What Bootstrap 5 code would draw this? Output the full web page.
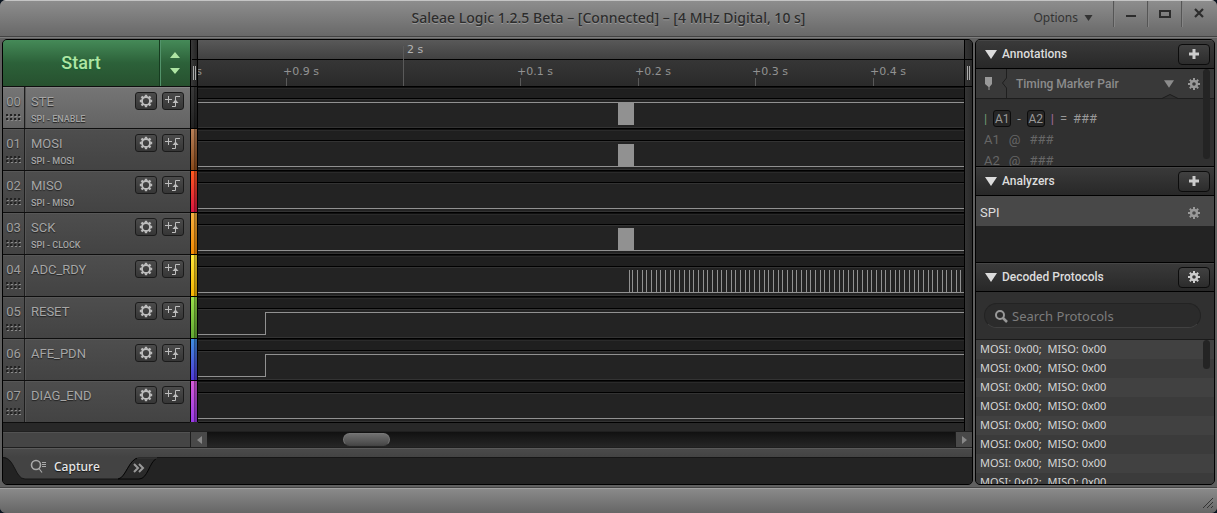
<!DOCTYPE html>
<html lang="en">
<head>
<meta charset="utf-8">
<meta name="viewport" content="width=device-width, initial-scale=1">
<title>Saleae Logic 1.2.5 Beta</title>
<link href="https://cdn.jsdelivr.net/npm/bootstrap@5.3.0/dist/css/bootstrap.min.css" rel="stylesheet">
<style>
body{background:#0a1420;font-family:Roboto,"Liberation Sans",sans-serif;font-size:13px;line-height:16px;color:#999}
button{font-family:inherit;border:0;background:none;padding:0;color:inherit}
svg{display:block;flex:none}
.app{background:#606060;border-radius:6px;overflow:hidden}
.lucid{font-family:"Noto Sans","Open Sans",sans-serif}
.titlebar{height:38px;border-top:1px solid #c4c4c4;background:linear-gradient(#8d8d8d,#686868 35px,#424242 35px,#424242 36px,#7b7b7b 36px);color:#2c2c2c;text-shadow:0 1px 0 #9a9a9a}
.titlebar h1{font-size:14px;line-height:18px;font-weight:500}
.win-tools{right:2px;top:0}
.win-tools .opt{font-size:12px;color:#333;margin-right:20px;gap:6px}
.wbtn{width:34px;height:26px;border-left:1px solid #555;box-shadow:inset 1px 0 #858585;color:#333}
.work{padding:1px 2px 3px;gap:2px}
.panel{border:1px solid #000;border-radius:5px;overflow:hidden;background:#282828}
.names{width:187px}
.strip{width:8px}
.head{height:46px}
.start{background:linear-gradient(#458a58,#2c6139 50%,#27512f);color:#aee5a3}
.start button:first-child{font-size:18px;font-weight:500;text-shadow:0 1px 1px #163;border-right:1px solid #163c20}
.start .updown{width:30px;box-shadow:inset 1px 0 #52936a}
#channels{border-bottom:1px solid #0e0e0e}
.chan{height:42px;border-top:1px solid #0e0e0e;background:linear-gradient(#4e4e4e,#434343);box-shadow:inset 0 1px #575757}
.chan.on{background:linear-gradient(#757575,#636363);box-shadow:inset 0 1px #858585}
.chan .num{width:22px;border-right:1px solid #1d1d1d;padding-top:7px;color:#a0a0a0;text-shadow:0 1px 1px #222}
.chan .lbl{padding:7px 0 0 6px;box-shadow:inset 1px 0 #555}
.chan .t1{font-size:13px;line-height:16px;color:#a6a6a6;text-shadow:0 1px 1px #222}
.chan .t2{font-size:9px;line-height:12px;margin-top:3px;color:#a6a6a6;font-weight:500;text-shadow:0 1px 1px #222}
.chan .tools{padding:5px 6px 0 0;gap:5px}
.sq{width:22px;height:18px;border:1px solid #1b1b1b;border-radius:3px;background:linear-gradient(#4b4b4b,#363636);color:#bdbdbd;display:grid;place-items:center}
.grip{width:8px;border:1px solid #000;border-width:0 1px;background:linear-gradient(90deg,#3a3a3a,#262626)}
.tag{height:42px;border:solid #000;border-width:1px 1px 0;background:linear-gradient(90deg,transparent 3px,rgba(0,0,0,.5) 3px,rgba(0,0,0,.25) 4px),linear-gradient(var(--a),var(--b))}
.ruler{background:linear-gradient(#595959,#414141 19px,#000 19px,#000 20px,#363636 20px,#2a2a2a)}
.ruler text{font:400 11px "DejaVu Sans",sans-serif;fill:#929292}
.ruler .major{fill:#b4b4b4}
.lane{height:42px;background:linear-gradient(#000 1px,#101010 1px,#101010 2px,#2a2a2a 2px,#2a2a2a 3px,#1f1f1f 3px,#1f1f1f 12px,#000 12px,#000 13px,#333 13px,#333 14px,#232323 14px,#232323 41px,#333 41px)}
.lane svg{stroke:#919191;fill:none;shape-rendering:crispEdges}
.filler{min-height:9px;border-top:1px solid #000}
.rail{width:8px;border-left:1px solid #000;background:linear-gradient(90deg,#343434,#292929)}
.hbar{height:16px;border-top:1px solid #202020;background:#454545;box-shadow:inset 0 1px #525252}
.track{background:linear-gradient(#111,#262626)}
.arrow{width:17px;background:#494949;color:#888;border-left:1px solid #1d1d1d}
.thumb{left:16%;width:47px;height:13px;top:1px;border-radius:7px;background:linear-gradient(#707070,#484848);border:1px solid #777;border-bottom-color:#444}
.tabs{height:37px;border-top:1px solid #1f1f1f;background:linear-gradient(#5a5a5a 1px,#4a4a4a 1px,#434343 9px,#161616 9px,#161616 10px,#232323 10px)}
.tabs .shape{left:0;top:9px}
.tabs .cap{color:#e8e8e8;font-size:12px;font-weight:500;padding:11px 0 0 27px;gap:7px;text-shadow:0 1px 1px #111}
.tabs .more{margin:13px 0 0 33px}
.side{width:240px;background:#232323}
.sec{height:29px;border-bottom:1px solid #000;background:linear-gradient(#3a3a3a,#282828);color:#dcdcdc;padding:0 4px 0 9px;gap:5px;box-shadow:inset 0 1px #464646}
.sec.mid{height:30px;border-top:1px solid #000}
.sec h2{font-size:12px;line-height:18px;font-weight:500}
.big{width:32px;height:21px;border:1px solid #0c0c0c;border-radius:4px;background:linear-gradient(#414141,#2c2c2c);color:#ccc;display:grid;place-items:center}
.anno{height:97px;background:#303030;overflow:hidden}
.pair{height:30px;background:#393939;border-bottom:1px solid #1d1d1d;color:#999}
.pair button.name{font-size:12px;font-weight:500;color:#8c8c8c}
.notch{left:186px;top:25px}
.eq{padding:9px 0 0 8px;color:#999}
.eq .line{height:21px;line-height:21px;gap:6px}
.eq .dim{color:#666;gap:9px}
.bar-a{color:#6f9a72}
.bar-b{color:#a66a98}
.key{border:1px solid #0c0c0c;border-radius:3px;background:#262626;width:18px;height:17px;font-size:12px;line-height:16px;text-align:center}
.vthumb{right:4px;width:7px;border-radius:4px;background:#242424}
.vthumb.long{height:90px}
.vthumb.short{height:29px}
.spi{height:30px;background:#484848;color:#ddd;padding:3px 13px 0 4px}
.anlz{height:66px}
.find{height:48px;background:#303030;border-bottom:1px solid #1a1a1a;padding:11px 13px 0 8px}
.find label{height:25px;border:1px solid #232323;border-bottom-color:#414141;border-radius:13px;background:#2b2b2b;padding:0 9px;gap:4px}
.find input{background:none;border:0;outline:0;color:#aaa;font-size:13px;padding:0;min-width:0}
.find input::placeholder{color:#7c7c7c;opacity:1}
.list li{height:19px;line-height:18px;font-size:11px;color:#d6d6d6;padding-left:4px;white-space:pre;background:#414141}
.list li:nth-child(even){background:#3b3b3b}
.status{height:25px;border-top:1px solid #a0a0a0;background:linear-gradient(#8a8a8a,#666);box-shadow:0 -1px #444}
</style>
</head>
<body>
<svg width="0" height="0" class="position-absolute" aria-hidden="true">
  <symbol id="gear" viewBox="0 0 14 14"><circle cx="7" cy="7" r="4" fill="none" stroke="currentColor" stroke-width="1.800"/><path d="M7 .8v2M7 11.200v2M.8 7h2M11.200 7h2M2.500 2.500l1.500 1.500M10 10l1.500 1.500M2.500 11.500L4 10M10 4l1.500-1.500" stroke="currentColor" stroke-width="2.400"/></symbol>
  <symbol id="cog" viewBox="0 0 14 14"><circle cx="7" cy="7" r="3" fill="none" stroke="currentColor" stroke-width="2.400"/><path d="M7 1v2.500M7 10.500v2.500M1 7h2.500M10.500 7H13M2.800 2.800l1.800 1.800M9.400 9.400l1.800 1.800M2.800 11.200l1.800-1.800M9.400 4.600l1.800-1.800" stroke="currentColor" stroke-width="2"/></symbol>
  <symbol id="trig" viewBox="0 0 16 12"><path d="M0 4.500h7M3.500 1v7M7 11.500h3.500v-10H15" fill="none" stroke="currentColor"/><path d="M7.500 8l3-3.500 3 3.500z" fill="currentColor"/></symbol>
  <symbol id="dots" viewBox="0 0 16 8"><path d="M0 1h16M0 5h16" stroke="#222" stroke-width="2" stroke-dasharray="2 2"/><path d="M1 2.500h15M1 6.500h15" stroke="#8a8a8a" stroke-dasharray="2 2"/></symbol>
  <symbol id="plus" viewBox="0 0 12 12"><path d="M6 1v10M1 6h10" stroke="currentColor" stroke-width="3"/></symbol>
  <symbol id="tri" viewBox="0 0 12 9"><path d="M0 0h12L6 9z" fill="currentColor"/></symbol>
</svg>
<div class="app vh-100 d-flex flex-column">
  <header class="titlebar position-relative d-flex justify-content-center flex-shrink-0 lucid">
    <h1 class="m-0 mt-2 text-nowrap">Saleae Logic 1.2.5 Beta – [Connected] – [4 MHz Digital, 10 s]</h1>
    <div class="win-tools position-absolute d-flex">
      <button class="opt d-flex align-items-center pt-2">Options <svg width="9" height="6"><use href="#tri"/></svg></button>
      <button class="wbtn" aria-label="Minimize"><svg class="mx-auto" width="12" height="14"><path d="M1 9h10" stroke="#2c2c2c" stroke-width="2"/></svg></button>
      <button class="wbtn" aria-label="Maximize"><svg class="mx-auto" width="14" height="14"><path d="M2 4h10v6H2z" fill="none" stroke="#2c2c2c" stroke-width="2"/></svg></button>
      <button class="wbtn" aria-label="Close"><svg class="mx-auto" width="12" height="14"><path d="M2 2l8 8M10 2l-8 8" stroke="#2c2c2c" stroke-width="2.200"/></svg></button>
    </div>
  </header>

  <div class="work d-flex flex-grow-1 overflow-hidden">
    <main class="panel d-flex flex-column flex-grow-1 overflow-hidden">
      <div class="d-flex flex-grow-1">
        <section class="names flex-shrink-0">
          <div class="start head d-flex">
            <button class="flex-grow-1">Start</button>
            <button class="updown d-flex flex-column align-items-center justify-content-center" aria-label="Capture settings"><svg width="10" height="24"><path d="M0 7L5 1l5 6zM0 17h10l-5 6z" fill="#aee5a3"/></svg></button>
          </div>
          <div id="channels"></div>
        </section>
        <div class="strip flex-shrink-0" id="tags">
          <div class="head grip d-flex justify-content-center"><svg width="5" height="46"><path d="M0 19.500h6" stroke="#000"/><path d="M1.500 26v14M3.500 26v14" stroke="#aaa"/></svg></div>
        </div>
        <section class="flex-grow-1 d-flex flex-column overflow-hidden">
          <div class="ruler head">
            <svg width="100%" height="46">
              <path d="M205.500 6v40M88.500 38v8M322.500 38v8M440.500 38v8M557.500 38v8M675.500 38v8" stroke="#5a5a5a"/>
              <text class="major" x="209" y="13">2 s</text>
              <text x="-32" y="35">+0.8 s</text><text x="85" y="35">+0.9 s</text><text x="319" y="35">+0.1 s</text><text x="437" y="35">+0.2 s</text><text x="554" y="35">+0.3 s</text><text x="672" y="35">+0.4 s</text>
            </svg>
          </div>
          <div class="lane"><svg width="100%" height="42"><line x1="0" x2="100%" y1="16.500" y2="16.500"/><path d="M420 28h16" stroke-width="22"/></svg></div>
          <div class="lane"><svg width="100%" height="42"><line x1="0" x2="100%" y1="38.500" y2="38.500"/><path d="M420 27h16" stroke-width="22"/></svg></div>
          <div class="lane"><svg width="100%" height="42"><line x1="0" x2="100%" y1="38.500" y2="38.500"/></svg></div>
          <div class="lane"><svg width="100%" height="42"><line x1="0" x2="100%" y1="38.500" y2="38.500"/><path d="M420 27h16" stroke-width="22"/></svg></div>
          <div class="lane"><svg width="100%" height="42"><line x1="0" x2="100%" y1="38.500" y2="38.500"/><path d="M431 27h1" stroke-width="22"/><line x1="434" x2="100%" y1="27" y2="27" stroke-width="22" stroke-dasharray="1 4 1 4 1 3 1 4 1 4 1 3 1 4 1 4 1 3 1 4 1 4 1 4 1 3 1 4 1 4 1 3"/></svg></div>
          <div class="lane"><svg width="100%" height="42"><path d="M0 38.500h67.500v-22"/><line x1="67" x2="100%" y1="16.500" y2="16.500"/></svg></div>
          <div class="lane"><svg width="100%" height="42"><path d="M0 38.500h67.500v-22"/><line x1="67" x2="100%" y1="16.500" y2="16.500"/></svg></div>
          <div class="lane"><svg width="100%" height="42"><line x1="0" x2="100%" y1="38.500" y2="38.500"/></svg></div>
          <div class="filler flex-grow-1"></div>
        </section>
        <div class="rail flex-shrink-0"><svg width="7" height="47"><path d="M0 19.500h7M0 46.500h7" stroke="#000"/><path d="M2.500 26v14M4.500 26v14" stroke="#aaa"/></svg></div>
      </div>
      <div class="hbar d-flex flex-shrink-0">
        <div class="names flex-shrink-0"></div>
        <button class="arrow" aria-label="Scroll left"><svg class="mx-auto" width="5" height="8"><path d="M5 0v8L0 4z" fill="currentColor"/></svg></button>
        <div class="track flex-grow-1 position-relative"><div class="thumb position-absolute ms-3"></div></div>
        <button class="arrow" aria-label="Scroll right"><svg class="mx-auto" width="5" height="8"><path d="M0 0v8l5-4z" fill="currentColor"/></svg></button>
      </div>
      <nav class="tabs position-relative d-flex align-items-start flex-shrink-0">
        <svg class="shape position-absolute" width="160" height="26"><path d="M0 0C12 0 12 22 22 22h93c7 0 11-22 22-22z" fill="#434343"/><path d="M0 .5C12 1 12 22 22 22h93" fill="none" stroke="#161616"/><path d="M115 22c8-1 11-21 21-21h18c-8 4-9 21-18 21z" fill="#2a2a2a" stroke="#060606"/><path d="M134 1h20" stroke="#4a4a4a"/></svg>
        <button class="cap position-relative d-flex lucid"><svg width="17" height="16"><circle cx="6" cy="6" r="4.500" fill="none" stroke="#aaa" stroke-width="1.600"/><path d="M9 9.500l3 4M12 3.500h4M12 5.500h4M12 7.500h4" stroke="#aaa" stroke-width="1.200"/></svg>Capture</button>
        <button class="more position-relative" aria-label="More tabs"><svg width="12" height="14"><path d="M1 3l4 4-4 4M6 3l4 4-4 4" fill="none" stroke="#999" stroke-width="2"/></svg></button>
      </nav>
    </main>

    <aside class="side panel d-flex flex-column flex-shrink-0">
      <div class="sec d-flex align-items-center flex-shrink-0"><svg width="12" height="9"><use href="#tri"/></svg><h2 class="m-0 me-auto">Annotations</h2><button class="big" aria-label="Add annotation"><svg width="12" height="12"><use href="#plus"/></svg></button></div>
      <div class="anno position-relative flex-shrink-0">
        <div class="pair d-flex align-items-center">
          <svg width="36" height="29"><path d="M9 8h7v7l-2.500 3v3h-1v-3L9 15z" fill="#999"/><path d="M30.500 0v9l-4 5 4 5v10" fill="none" stroke="#1f1f1f"/></svg>
          <button class="name d-flex align-items-center flex-grow-1 ms-1">Timing Marker Pair<svg class="ms-auto" width="10" height="8"><use href="#tri"/></svg></button>
          <svg class="mx-2 ps-1" width="20" height="14"><use href="#cog"/></svg>
          <span class="ps-1"></span>
        </div>
        <svg class="notch position-absolute" width="16" height="5"><path d="M0 4.500L8 .5l8 4" fill="#303030" stroke="#1d1d1d"/></svg>
        <div class="eq">
          <div class="line d-flex align-items-center"><span class="bar-a">|</span><span class="key">A1</span><span>-</span><span class="key">A2</span><span class="bar-b">|</span><span>=</span><span>###</span></div>
          <div class="line dim d-flex"><span>A1</span><span>@</span><span>###</span></div>
          <div class="line dim d-flex"><span>A2</span><span>@</span><span>###</span></div>
        </div>
        <div class="vthumb long position-absolute top-0"></div>
      </div>
      <div class="sec mid d-flex align-items-center flex-shrink-0"><svg width="12" height="9"><use href="#tri"/></svg><h2 class="m-0 me-auto">Analyzers</h2><button class="big" aria-label="Add analyzer"><svg width="12" height="12"><use href="#plus"/></svg></button></div>
      <div class="anlz flex-shrink-0"><div class="spi d-flex align-items-center justify-content-between"><span>SPI</span><svg width="14" height="14" color="#999"><use href="#cog"/></svg></div></div>
      <div class="sec mid d-flex align-items-center flex-shrink-0"><svg width="12" height="9"><use href="#tri"/></svg><h2 class="m-0 me-auto">Decoded Protocols</h2><button class="big" aria-label="Protocol settings"><svg width="14" height="14"><use href="#cog"/></svg></button></div>
      <div class="find flex-shrink-0"><label class="d-flex align-items-center"><svg width="14" height="14"><circle cx="6" cy="6" r="4" fill="none" stroke="#999" stroke-width="2"/><path d="M9 9l4 4" stroke="#999" stroke-width="2.500"/></svg><input class="lucid flex-grow-1" type="search" placeholder="Search Protocols" aria-label="Search Protocols"></label></div>
      <div class="position-relative flex-grow-1 overflow-hidden">
        <ul class="list list-unstyled m-0 lucid">
          <li>MOSI: 0x00;  MISO: 0x00</li><li>MOSI: 0x00;  MISO: 0x00</li><li>MOSI: 0x00;  MISO: 0x00</li><li>MOSI: 0x00;  MISO: 0x00</li><li>MOSI: 0x00;  MISO: 0x00</li><li>MOSI: 0x00;  MISO: 0x00</li><li>MOSI: 0x00;  MISO: 0x00</li><li>MOSI: 0x02;  MISO: 0x00</li>
        </ul>
        <div class="vthumb short position-absolute top-0"></div>
      </div>
    </aside>
  </div>

  <footer class="status d-flex justify-content-end align-items-end flex-shrink-0"><svg width="16" height="16"><path d="M2 11L12 1M6 11l6-6M10 11l2-2" stroke="#333"/></svg></footer>
</div>
<script src="https://cdn.jsdelivr.net/npm/bootstrap@5.3.0/dist/js/bootstrap.bundle.min.js"></script>
<script>
const channels = [
  ['STE', 'SPI - ENABLE', '#3a3a3a', '#222'],
  ['MOSI', 'SPI - MOSI', '#b98058', '#8a4a1a'],
  ['MISO', 'SPI - MISO', '#ff5a1e', '#dc1440'],
  ['SCK', 'SPI - CLOCK', '#f5b040', '#f58a00'],
  ['ADC_RDY', '', '#ffe83a', '#f5b400'],
  ['RESET', '', '#9be04a', '#62a832'],
  ['AFE_PDN', '', '#3f8fe0', '#5038d8'],
  ['DIAG_END', '', '#d65ad8', '#9a3ae8']
];
channels.forEach(([name, role, a, b], i) => {
  document.getElementById('channels').insertAdjacentHTML('beforeend', `
    <div class="chan d-flex ${i ? '' : 'on'}">
      <div class="num text-center">0${i}<svg class="mx-auto mt-1" width="16" height="8"><use href="#dots"/></svg></div>
      <div class="lbl flex-grow-1"><div class="t1">${name}</div><div class="t2">${role}</div></div>
      <div class="tools d-flex">
        <button class="sq" aria-label="${name} settings"><svg width="14" height="14"><use href="#gear"/></svg></button>
        <button class="sq" aria-label="${name} trigger"><svg width="16" height="12"><use href="#trig"/></svg></button>
      </div>
    </div>`);
  document.getElementById('tags').insertAdjacentHTML('beforeend', `<div class="tag" style="--a:${a};--b:${b}"></div>`);
});
</script>
</body>
</html>
